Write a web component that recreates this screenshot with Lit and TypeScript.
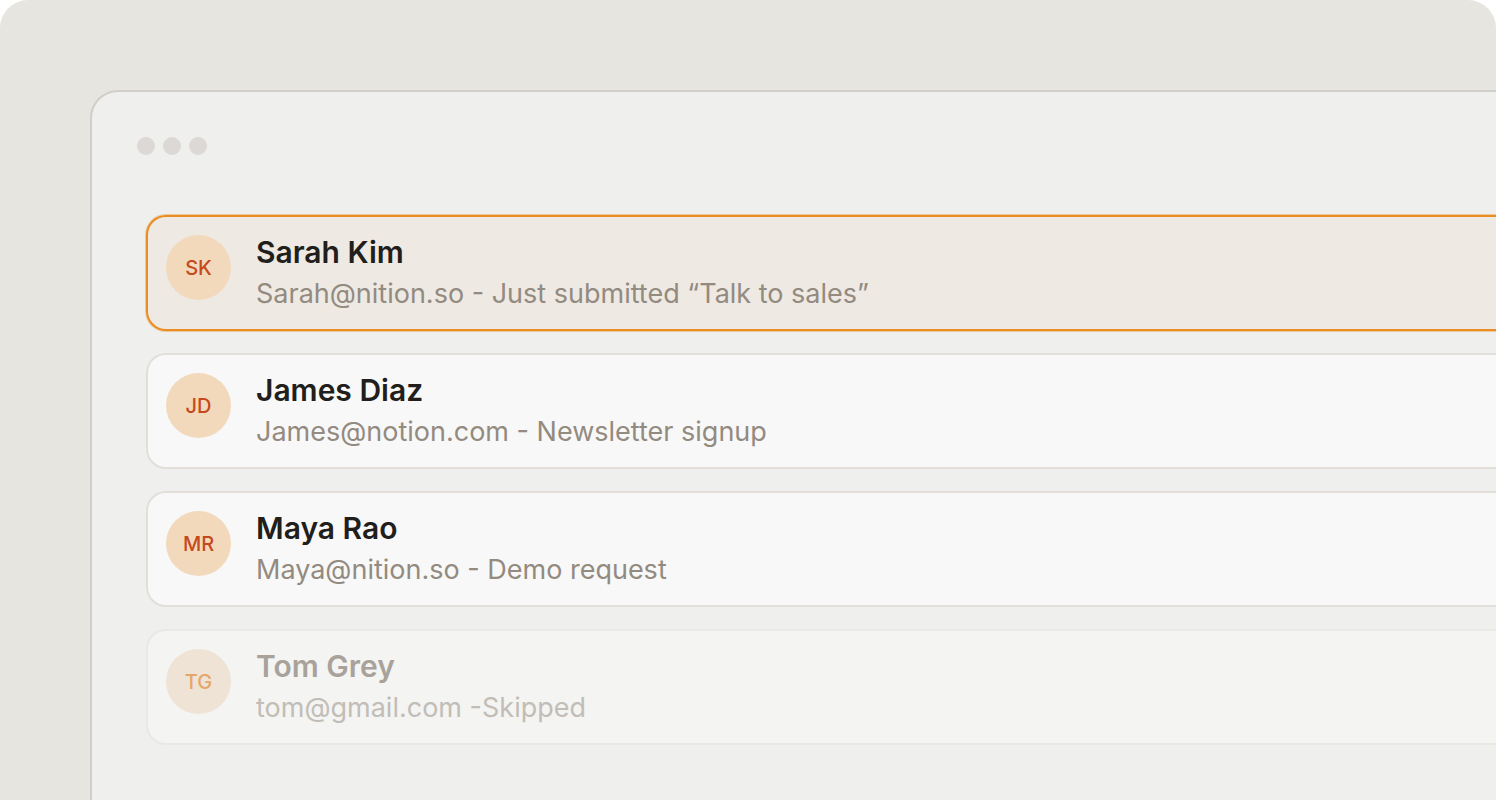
import { LitElement, html, css } from "lit";
import { customElement, property } from "lit/decorators.js";
import { classMap } from "lit/directives/class-map.js";

interface Lead {
  initials: string;
  name: string;
  detail: string;
  state: "active" | "normal" | "skipped";
}

const leads: Lead[] = [
  { initials: "SK", name: "Sarah Kim", detail: "Sarah@nition.so - Just submitted “Talk to sales”", state: "active" },
  { initials: "JD", name: "James Diaz", detail: "James@notion.com - Newsletter signup", state: "normal" },
  { initials: "MR", name: "Maya Rao", detail: "Maya@nition.so - Demo request", state: "normal" },
  { initials: "TG", name: "Tom Grey", detail: "tom@gmail.com -Skipped", state: "skipped" },
];

@customElement("lead-card")
export class LeadCard extends LitElement {
  @property({ attribute: false }) lead!: Lead;

  static styles = css`
    :host {
      display: block;
    }
    .card {
      display: flex;
      align-items: flex-start;
      gap: 25px;
      padding: 14px 0 14px 18px;
      border: 2px solid #e2dfdb;
      border-right: 0;
      border-radius: 20px 0 0 20px;
      background: #f8f8f8;
    }
    .avatar {
      display: flex;
      flex: none;
      align-items: center;
      justify-content: center;
      width: 65px;
      height: 65px;
      margin-top: 4px;
      border-radius: 50%;
      background: #f3d9bc;
      color: #c44a1c;
      font-size: 20px;
      font-weight: 500;
    }
    .text {
      min-width: 0;
      line-height: 42px;
      white-space: nowrap;
    }
    .name {
      margin: 0;
      color: #211e1b;
      font-size: 30px;
      font-weight: 600;
    }
    .detail {
      margin: 0;
      color: #938a80;
      font-size: 27px;
    }
    .active {
      border-color: #ea8e23;
      background: #eee9e3;
      box-shadow: 0 0 0 1px rgba(234, 142, 35, 0.4);
    }
    .skipped {
      border-color: #e9e8e5;
      background: #f4f4f2;
    }
    .skipped .avatar {
      background: #efe3d5;
      color: #e5a768;
    }
    .skipped .name {
      color: #a8a29b;
    }
    .skipped .detail {
      color: #c2bdb6;
    }
  `;

  render() {
    const { initials, name, detail, state } = this.lead;
    return html`
      <article class=${classMap({ card: true, [state]: true })}>
        <div class="avatar" aria-hidden="true">${initials}</div>
        <div class="text">
          <h2 class="name">${name}</h2>
          <p class="detail">${detail}</p>
        </div>
      </article>
    `;
  }
}

@customElement("app-root")
export class AppRoot extends LitElement {
  static styles = css`
    :host {
      display: block;
      background: #ffffff;
      font-family: Inter, "Liberation Sans", sans-serif;
    }
    .stage {
      display: flex;
      box-sizing: border-box;
      min-height: 100vh;
      padding: 90px 0 0 90px;
      border-radius: 28px 28px 0 0;
      background: #e6e5df;
    }
    .window {
      flex: 1;
      min-width: 0;
      overflow: hidden;
      padding: 45px 0 45px 45px;
      border: 2px solid #d1cdc9;
      border-right: 0;
      border-bottom: 0;
      border-radius: 28px 0 0 0;
      background: #efefed;
    }
    .dots {
      display: flex;
      gap: 8px;
    }
    .dot {
      width: 18px;
      height: 18px;
      border-radius: 50%;
      background: #dcd8d5;
    }
    .list {
      display: grid;
      gap: 22px;
      margin: 60px 0 0;
      padding: 0 0 0 9px;
      list-style: none;
    }
  `;

  render() {
    return html`
      <main class="stage">
        <section class="window" aria-label="Leads">
          <div class="dots" aria-hidden="true">
            <span class="dot"></span><span class="dot"></span><span class="dot"></span>
          </div>
          <ul class="list">
            ${leads.map((lead) => html`<li><lead-card .lead=${lead}></lead-card></li>`)}
          </ul>
        </section>
      </main>
    `;
  }
}
